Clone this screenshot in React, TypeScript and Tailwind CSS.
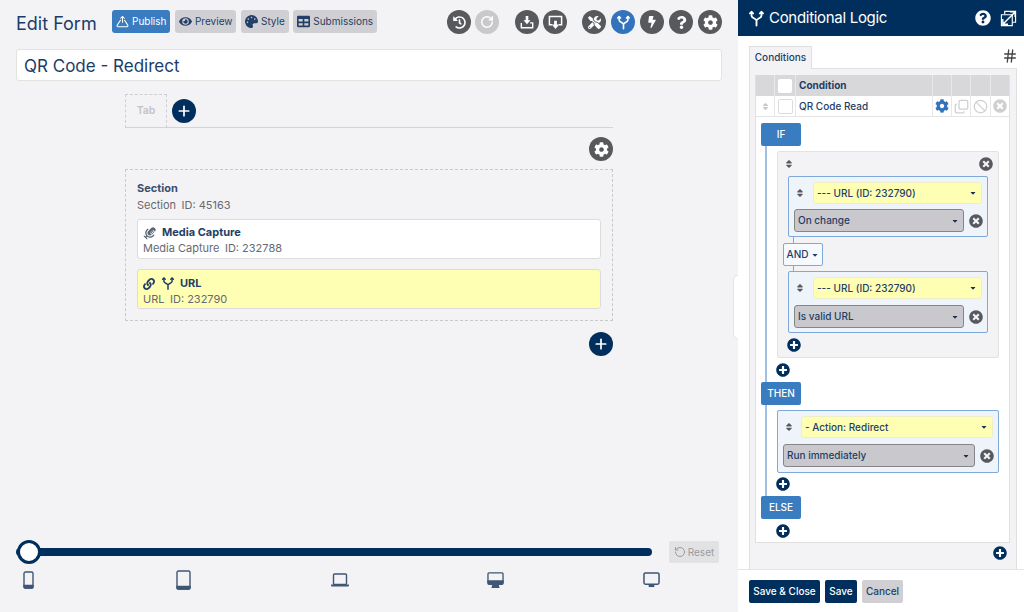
import React from "react";
import { FaBolt, FaCaretDown, FaCog, FaEye, FaLink, FaPalette, FaPlusCircle, FaQuestion, FaQuestionCircle, FaSort, FaTable, FaTimesCircle, FaTools, FaHistory } from "react-icons/fa";
import { FaMicrophoneLines } from "react-icons/fa6";
import { Plus, RotateCcw, RotateCw, Ban, Copy, Hash } from "lucide-react";

const Fork = ({ className = "" }: { className?: string }) => (
  <svg viewBox="0 0 24 24" className={className} fill="none" stroke="currentColor" strokeWidth="2.6" strokeLinecap="round" strokeLinejoin="round">
    <path d="M12 22v-7c0-3-7-3-7-7V3M12 15c0-3 7-3 7-7V3" />
    <path d="M2.800 4.800 5 2.600l2.200 2.200M16.800 4.800 19 2.600l2.200 2.200" />
  </svg>
);

const PublishIcon = () => (
  <svg viewBox="0 0 16 16" className="w-[13px] h-[13px]" fill="none" stroke="currentColor" strokeWidth="1.3" strokeLinecap="round" strokeLinejoin="round">
    <path d="M8 9V2M5.800 4 8 1.800 10.200 4" />
    <path d="M5.500 6.500 1.500 12.500c-.5 1 0 2 1 2h11c1 0 1.500-1 1-2l-4-6" />
  </svg>
);

const TrayDown = () => (
  <svg viewBox="0 0 16 16" className="w-[14px] h-[14px]" fill="none" stroke="currentColor" strokeWidth="1.6">
    <path d="M1.500 9v5.500h13V9h-3" />
    <path d="M6.500 1h3v5H12L8 10.500 4 6h2.500z" fill="currentColor" stroke="none" />
  </svg>
);

const ScreenDown = () => (
  <svg viewBox="0 0 16 16" className="w-[15px] h-[15px]" fill="none" stroke="currentColor" strokeWidth="1.6">
    <path d="M4.500 10.500H1.500v-9h13v9h-3" />
    <path d="M6.500 6h3v4H12l-4 5-4-5h2.500z" fill="currentColor" stroke="none" />
  </svg>
);

const ExpandIcon = () => (
  <svg viewBox="0 0 18 18" className="w-[17px] h-[17px]" fill="none" stroke="currentColor" strokeWidth="1.2">
    <path d="M5 4.500V1.500h11.500V13h-3" />
    <path d="M1.500 5h11.500v11.500H1.500z" />
    <path d="M3 15 16 2M10.500 2H16v5.500M3 9.500V15h5.500" strokeWidth="1.500" />
  </svg>
);

const Phone = () => (
  <svg viewBox="0 0 11 18" className="w-[11px] h-[18px]" fill="none" stroke="currentColor" strokeWidth="1.400">
    <rect x="1" y="1" width="9" height="16" rx="1.500" />
    <path d="M1 14.500h9V16a1 1 0 0 1-1 1H2a1 1 0 0 1-1-1z" fill="currentColor" />
  </svg>
);

const Tablet = () => (
  <svg viewBox="0 0 15 20" className="w-[15px] h-[20px]" fill="none" stroke="currentColor" strokeWidth="1.400">
    <rect x="1" y="1" width="13" height="18" rx="1.500" />
    <path d="M1 16.500h13V18a1 1 0 0 1-1 1H2a1 1 0 0 1-1-1z" fill="currentColor" />
  </svg>
);

const Laptop = () => (
  <svg viewBox="0 0 18 14" className="w-[18px] h-[14px]" fill="none" stroke="currentColor" strokeWidth="1.400">
    <rect x="2.500" y="1" width="13" height="10.500" rx="1" />
    <path d="M0 11.500h18v1a1 1 0 0 1-1 1H1a1 1 0 0 1-1-1z" fill="currentColor" stroke="none" />
  </svg>
);

const DesktopIcon = () => (
  <svg viewBox="0 0 18 17" className="w-[17px] h-[16px]" fill="none" stroke="currentColor" strokeWidth="1.400">
    <rect x="1" y="1" width="16" height="11" rx="1" />
    <path d="M1 9.500h16V12a1 1 0 0 1-1 1H2a1 1 0 0 1-1-1zM6.500 13h5l1 3.500h-7z" fill="currentColor" />
  </svg>
);

const MonitorIcon = () => (
  <svg viewBox="0 0 18 17" className="w-[17px] h-[16px]" fill="none" stroke="currentColor" strokeWidth="1.600">
    <rect x="1" y="1" width="16" height="12" rx="1.500" />
    <path d="M6 13.500h6v2.500H6z" fill="currentColor" stroke="none" />
  </svg>
);

const Round = ({ children, active = false, off = false }: { children: React.ReactNode; active?: boolean; off?: boolean }) => (
  <span className={`w-6 h-6 rounded-full flex items-center justify-center text-white shrink-0 ${active ? "bg-[#3273bb]" : off ? "bg-[#c9c9cb]" : "bg-[#58595c]"}`}>
    {children}
  </span>
);

const Navy = ({ className = "" }: { className?: string }) => (
  <span className={`w-6 h-6 rounded-full bg-[#012f5d] text-white flex items-center justify-center ${className}`}>
    <Plus size={16} strokeWidth={2.6} />
  </span>
);

const SmallPlus = ({ className = "" }: { className?: string }) => (
  <span className={`block w-[14px] h-[14px] rounded-full bg-white text-[#012f5d] ${className}`}>
    <FaPlusCircle size={14} />
  </span>
);

const TopButton = ({ icon, label, blue = false }: { icon: React.ReactNode; label: string; blue?: boolean }) => (
  <span className={`h-[23px] px-[4px] rounded-[3px] flex items-center gap-[3px] text-[10px] ${blue ? "bg-[#3a7cc0] text-white" : "bg-[#d0d0d4] text-[#243f66]"}`}>
    {icon}
    {label}
  </span>
);

const Field = ({ icon, title, sub, yellow = false, className = "" }: { icon: React.ReactNode; title: string; sub: string; yellow?: boolean; className?: string }) => (
  <div className={`h-[40px] rounded-[3px] border border-[#dcdcdc] px-[5px] ${yellow ? "bg-[#ffffb4]" : "bg-white"} ${className}`}>
    <div className="flex items-center gap-[5px] h-[17px] text-[11px] font-bold text-[#233e66]">
      {icon}
      {title}
    </div>
    <div className="text-[11px] leading-[15px] text-[#666a70]">{sub}</div>
  </div>
);

const Select = ({ label, yellow = false, className = "" }: { label: string; yellow?: boolean; className?: string }) => (
  <div className={`flex items-center justify-between rounded-[3px] px-[3px] text-[10px] font-medium text-[#233e66] ${yellow ? "h-[22px] bg-[#ffffb4] border border-[#eeeec8]" : "h-[23px] bg-[#c9c9cd] border border-[#85858a]"} ${className}`}>
    <span>{label}</span>
    <FaCaretDown size={8} className="text-[#1c2f4e] mr-[1px]" />
  </div>
);

const SortIcon = () => <FaSort size={10} className="text-[#58595c]" />;

const RuleBox = ({ top, bottom, gapClass, padClass, widthClass, yellowClass }: { top: string; bottom: string; gapClass: string; padClass: string; widthClass: string; yellowClass: string }) => (
  <div className={`border border-[#7ea9d9] rounded-[2px] bg-[#eff4fb] pl-[5px] pr-[5px] pt-[5px] ${padClass} ${widthClass} flex flex-col ${gapClass}`}>
    <div className="flex items-center">
      <span className={`flex pl-px ${yellowClass}`}>
        <SortIcon />
      </span>
      <Select label={top} yellow className="flex-1" />
    </div>
    <div className="flex items-center">
      <Select label={bottom} className="flex-1" />
      <FaTimesCircle size={14} className="text-[#58595c] ml-[5px] -mr-px shrink-0" />
    </div>
  </div>
);

const StepButton = ({ label }: { label: string }) => (
  <div className="w-[40px] h-[23px] rounded-[2px] bg-[#3a7cc0] text-white text-[10px] font-medium flex items-center justify-center">{label}</div>
);

const Cell = ({ children, className = "" }: { children?: React.ReactNode; className?: string }) => (
  <div className={`flex items-center justify-center border-r border-[#e8e8e8] ${className}`}>{children}</div>
);

export default function App() {
  return (
    <div className="flex w-[1024px] h-[612px] overflow-hidden font-['Inter','Liberation_Sans',sans-serif] text-[#233e66]">
      <main className="relative w-[738px] shrink-0 bg-[#f3f3f6] px-4 flex flex-col">
        <header className="mt-[10px] h-6 flex items-center">
          <h1 className="text-[18px] font-normal text-[#1c3c68] w-[96px] pt-[3px]">Edit Form</h1>
          <div className="flex gap-[4.500px] -mt-[1px]">
            <TopButton blue icon={<PublishIcon />} label="Publish" />
            <TopButton icon={<FaEye size={13} />} label="Preview" />
            <TopButton icon={<FaPalette size={13} />} label="Style" />
            <TopButton icon={<FaTable size={13} />} label="Submissions" />
          </div>
          <div className="ml-auto flex items-center">
            <div className="flex gap-1">
              <Round><FaHistory size={13} /></Round>
              <Round off><RotateCw size={14} strokeWidth={2.5} /></Round>
            </div>
            <div className="flex gap-1 ml-4">
              <Round><TrayDown /></Round>
              <Round><ScreenDown /></Round>
            </div>
            <div className="flex gap-[5px] ml-[15px]">
              <Round><FaTools size={13} /></Round>
              <Round active><Fork className="w-[15px] h-[15px]" /></Round>
              <Round><FaBolt size={12} /></Round>
              <Round><FaQuestion size={13} /></Round>
              <Round><FaCog size={15} /></Round>
            </div>
          </div>
        </header>

        <div className="mt-[15px] h-[32px] rounded-[3px] bg-white border border-[#e2e2de] px-[7px] pt-[3px] flex items-center text-[17px] text-[#1c3c68]">
          QR Code - Redirect
        </div>

        <div className="ml-[109px] w-[488px]">
          <div className="mt-[13px] h-[34px] border-b border-[#d4d4d6] flex items-center">
            <div className="w-[42px] h-[34px] border border-b-0 border-dashed border-[#cfcfcf] flex items-center justify-center text-[10.500px] font-semibold text-[#c2c2c4]">Tab</div>
            <Navy className="ml-[5px]" />
          </div>
          <div className="mt-[9px] flex justify-end">
            <Round><FaCog size={15} /></Round>
          </div>
          <section className="mt-[8px] h-[152px] border border-dashed border-[#c9c9c9] px-[11px] pt-[10px]">
            <div className="text-[11px] leading-[17px] font-bold text-[#3a4f6e]">Section</div>
            <div className="text-[11px] leading-[17px] text-[#666a70]">{"Section\u2002ID: 45163"}</div>
            <Field className="mt-[5px] pt-[4px]" icon={<FaMicrophoneLines size={14} className="text-[#5d6675] rotate-45" />} title="Media Capture" sub={"Media Capture\u2002ID: 232788"} />
            <Field yellow className="mt-[10px] pt-[5px]" icon={<span className="flex items-center gap-[6px] text-[#233e66]"><FaLink size={12} /><Fork className="w-[14px] h-[15px]" /></span>} title="URL" sub={"URL\u2002ID: 232790"} />
          </section>
          <div className="mt-[11px] flex justify-end">
            <Navy />
          </div>
        </div>

        <div className="mt-auto flex items-center h-6">
          <div className="relative w-[636px] h-[8px] rounded-full bg-[#012f5d]">
            <span className="absolute left-px -top-[8px] w-[24px] h-[24px] rounded-full bg-white border-[3px] border-[#012f5d]" />
          </div>
          <span className="ml-[17px] h-[22px] w-[50px] rounded-[2px] bg-[#e2e2e4] text-[#9a9a9c] text-[10px] flex items-center justify-center gap-[2px]">
            <RotateCcw size={12} />Reset
          </span>
        </div>
        <div className="mt-[6px] mb-[22px] ml-[2px] w-[643px] h-[20px] flex items-center justify-between text-[#3f5674]">
          <span className="w-5 flex justify-center"><Phone /></span>
          <span className="w-5 flex justify-center"><Tablet /></span>
          <span className="w-5 flex justify-center"><Laptop /></span>
          <span className="w-5 flex justify-center"><DesktopIcon /></span>
          <span className="w-5 flex justify-center"><MonitorIcon /></span>
        </div>
        <span className="absolute right-0 top-[275px] w-[5px] h-[64px] rounded-l-[5px] bg-white border border-r-0 border-[#e4e4e4]" />
      </main>

      <aside className="flex-1 bg-white flex flex-col min-w-0">
        <header className="h-9 bg-[#012f5d] text-white flex items-center pl-[10px] pr-[7px] shrink-0">
          <Fork className="w-[17px] h-[17px]" />
          <span className="ml-[4px] text-[15px] tracking-[-0.3px]">Conditional Logic</span>
          <FaQuestionCircle size={16} className="ml-auto" />
          <span className="ml-[9px]"><ExpandIcon /></span>
        </header>

        <div className="flex-1 min-h-0 flex flex-col pl-[11px] pr-[7px] pt-[10px]">
          <div className="h-[22px] flex items-end justify-between shrink-0">
            <div className="w-[63px] h-[23px] -mb-px z-10 bg-[#f3f3f6] border border-b-0 border-[#e0e0e0] flex items-center justify-center text-[10px] font-medium pb-[2px]">Conditions</div>
            <Hash size={16} strokeWidth={2} className="text-[#444] mb-[4px] mr-[-1px]" />
          </div>
          <div className="flex-1 min-h-0 bg-[#f3f3f6] border border-b-0 border-[#e0e0e0] pl-[5px] pr-[6px] pt-[6px]">
            <div className="h-[468px] bg-white border border-t-0 border-[#e0e0e0] text-[10px]">
              <div className="flex h-[21px] bg-[#d8d8da]">
                <Cell className="w-[19px]" />
                <Cell className="w-[21px]"><span className="w-[14px] h-[14px] bg-white rounded-[2px]" /></Cell>
                <div className="flex-1 flex items-center pl-[3px] font-bold border-r border-[#e8e8e8]">Condition</div>
                <Cell className="w-[19px]" />
                <Cell className="w-[19px]" />
                <Cell className="w-[20px]" />
                <div className="w-[18px]" />
              </div>
              <div className="flex h-[21px] border-b border-[#e4e4e4]">
                <Cell className="w-[19px]"><FaSort size={9} className="text-[#c8c8c8]" /></Cell>
                <Cell className="w-[21px]"><span className="w-[15px] h-[15px] bg-white border border-[#dcdcdc] rounded-[2px]" /></Cell>
                <div className="flex-1 flex items-center pl-[3px] font-medium border-r border-[#e8e8e8]">QR Code Read</div>
                <Cell className="w-[19px]"><FaCog size={14} className="text-[#3273bb]" /></Cell>
                <Cell className="w-[19px]"><Copy size={15} className="text-[#cfcfcf] rotate-180 -scale-x-100" /></Cell>
                <Cell className="w-[20px]"><Ban size={15} strokeWidth={2} className="text-[#cfcfcf]" /></Cell>
                <div className="w-[18px] flex items-center justify-center"><FaTimesCircle size={14} className="text-[#cfcfcf]" /></div>
              </div>

              <div className="pl-[5px] pt-[6px]">
                <StepButton label="IF" />
                <div className="ml-1 border-l-2 border-[#9fc0e4] pl-[9px] pt-[5px]">
                  <div className="ml-px w-[222px] h-[207px] bg-[#f3f3f6] border border-[#e2e2e2] rounded-[2px]">
                    <div className="h-[24px] flex items-center justify-between pl-[6px] pr-[5px]">
                      <SortIcon />
                      <FaTimesCircle size={14} className="text-[#58595c]" />
                    </div>
                    <div className="ml-[10px]">
                      <RuleBox top="--- URL (ID: 232790)" bottom="On change" gapClass="gap-[5px]" padClass="pb-[4px]" widthClass="w-[200px]" yellowClass="w-[19px]" />
                      <div className="ml-[5px] w-px h-[6px] bg-[#7ea9d9]" />
                      <div className="-ml-[5px] w-[40px] h-[23px] rounded-[2px] border border-[#7ea9d9] bg-[#f6f9fd] flex items-center justify-center gap-[3px] text-[10px] font-medium">
                        AND <FaCaretDown size={8} />
                      </div>
                      <div className="ml-[5px] w-px h-[5px] bg-[#7ea9d9]" />
                      <RuleBox top="--- URL (ID: 232790)" bottom="Is valid URL" gapClass="gap-[6px]" padClass="pb-[4px]" widthClass="w-[200px]" yellowClass="w-[19px]" />
                      <SmallPlus className="-ml-[1px] mt-[5px]" />
                    </div>
                  </div>
                  <SmallPlus className="mt-[5px]" />
                  <div className="h-[5px]" />
                </div>
                <StepButton label="THEN" />
                <div className="ml-1 border-l-2 border-[#9fc0e4] pl-[9px] pt-[5px]">
                  <div className="ml-px">
                    <RuleBox top="- Action: Redirect" bottom="Run immediately" gapClass="gap-[6px]" padClass="pb-[5px]" widthClass="w-[222px]" yellowClass="w-[18px]" />
                  </div>
                  <SmallPlus className="mt-[4px]" />
                  <div className="h-[5px]" />
                </div>
                <StepButton label="ELSE" />
                <SmallPlus className="ml-[15px] mt-[5px]" />
              </div>
            </div>
            <div className="flex justify-end mt-[3px] mr-[3px]">
              <SmallPlus />
            </div>
          </div>
        </div>

        <footer className="h-[43px] shrink-0 border-t border-[#e4e4e4] pl-[11px] pt-[10px] flex gap-[5px] items-start text-[10px] font-medium">
          <span className="h-[23px] w-[71px] rounded-[2px] bg-[#012f5d] text-white flex items-center justify-center">Save &amp; Close</span>
          <span className="h-[23px] w-[32px] rounded-[2px] bg-[#012f5d] text-white flex items-center justify-center">Save</span>
          <span className="h-[23px] w-[41px] rounded-[2px] bg-[#d0d0d4] text-[#233e66] flex items-center justify-center">Cancel</span>
        </footer>
      </aside>
    </div>
  );
}
